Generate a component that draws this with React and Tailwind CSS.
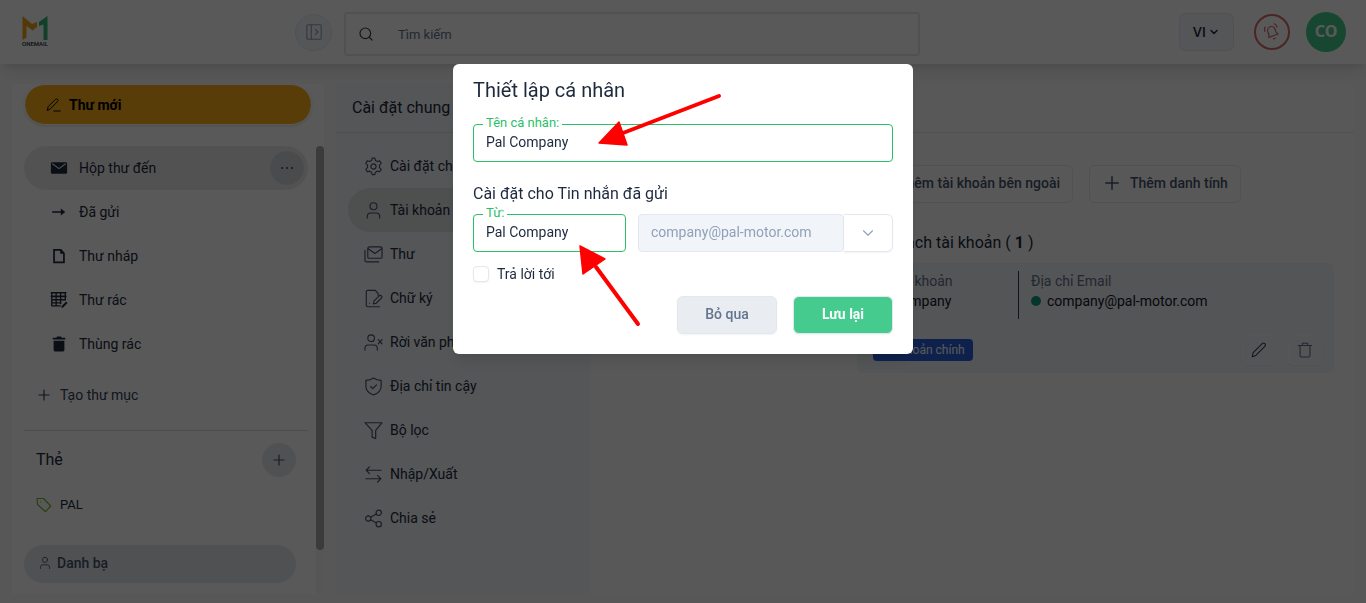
import { ChevronDown, Search } from 'lucide-react';

const Icon = ({ children, className = 'size-5', viewBox = '0 0 20 20' }) => (
    <svg
        viewBox={viewBox}
        className={className}
        fill="none"
        stroke="currentColor"
        strokeWidth="1.2"
        strokeLinecap="round"
        strokeLinejoin="round"
        aria-hidden="true"
    >
        {children}
    </svg>
);

const PlusIcon = ({ className = 'size-4' }) => (
    <Icon className={className} viewBox="0 0 16 16">
        <path d="M8 3v10M3 8h10" />
    </Icon>
);

const folders = [
    {
        label: 'Hộp thư đến',
        active: true,
        icon: (
            <>
                <rect x="1" y="3.5" width="18" height="13" rx="1.4" fill="currentColor" stroke="none" />
                <path d="M3 5.5l7 5.2 7-5.2" stroke="#e9e9e9" strokeWidth="1.3" />
            </>
        ),
    },
    {
        label: 'Đã gửi',
        icon: (
            <>
                <path d="M3 10h10" strokeWidth="1.8" />
                <path d="M12 6l5 4-5 4z" fill="currentColor" stroke="none" />
            </>
        ),
    },
    {
        label: 'Thư nháp',
        icon: (
            <>
                <path d="M4.5 3.3h7.5l3.500 3.700v10h-11z" strokeWidth="1.9" strokeLinejoin="miter" />
                <path d="M11.3 3v4.500h4.500z" fill="currentColor" stroke="none" />
            </>
        ),
    },
    {
        label: 'Thư rác',
        icon: (
            <>
                <path d="M1.500 2h16M1.500 6h16" strokeWidth="1.8" />
                <path d="M2 2v14.500h9.500M2 9.700h15M2 13.200h10M6.800 2v14.500M11.800 2v12M17 2v8" strokeWidth="1.5" />
                <path d="M12.500 19l.500-2.300 5-5 1.500 1.500-5 5z" fill="currentColor" stroke="none" />
            </>
        ),
    },
    {
        label: 'Thùng rác',
        icon: (
            <path
                d="M4 6.500h12v10.300a1.500 1.500 0 0 1-1.500 1.500h-9a1.500 1.500 0 0 1-1.500-1.500zM3 3h4l.7-1.200h4.600L13 3h4v2H3z"
                fill="currentColor"
                stroke="none"
            />
        ),
    },
];

const settings = [
    {
        label: 'Cài đặt chung',
        icon: (
            <>
                <circle cx="10" cy="10" r="2.700" />
                <path d="M8.600 1.200h2.800l.700 2.500 1.900 1.100 2.500-.700 1.600 2.600-1.800 1.800v2.600l1.800 1.900-1.600 2.600-2.500-.700-1.900 1.100-.700 2.600H8.600l-.700-2.600L6 14.900l-2.500.700L1.900 13l1.800-1.900V8.500L1.900 6.700l1.600-2.600 2.500.700 1.900-1.100z" />
            </>
        ),
    },
    {
        label: 'Tài khoản',
        active: true,
        icon: (
            <>
                <circle cx="10" cy="5.500" r="3.700" />
                <path d="M3.500 18v-2a3.500 3.500 0 0 1 3.500-3.400h6a3.500 3.500 0 0 1 3.500 3.400v2" />
            </>
        ),
    },
    {
        label: 'Thư',
        icon: (
            <>
                <rect x="4" y="2" width="15" height="12" rx="1.500" />
                <path d="M4.500 4l7 5 7-5M1 5.500v10.500a1.800 1.800 0 0 0 1.800 1.800h12.700" />
            </>
        ),
    },
    {
        label: 'Chữ ký',
        icon: (
            <>
                <path d="M15 5.200L12 1.500H4a1.600 1.600 0 0 0-1.600 1.600v14A1.600 1.600 0 0 0 4 18.700h12.500M6 15h.1M15 5.200V7" />
                <path d="M10.500 12.800l5.500-5.500a1.600 1.600 0 0 1 2.300 2.300l-5.500 5.400-2.900.700z" />
            </>
        ),
    },
    {
        label: 'Rời văn phòng',
        icon: (
            <>
                <circle cx="7.500" cy="5.500" r="3.500" />
                <path d="M1 18v-2a3.500 3.500 0 0 1 3.500-3.400h6a3.500 3.500 0 0 1 3.500 3.400v2M15 7l4 4.500M19 7l-4 4.500" />
            </>
        ),
    },
    {
        label: 'Địa chỉ tin cậy',
        icon: (
            <>
                <path d="M10 1c2.200 1.700 4.900 2.500 8 2.500V10c0 4.200-3.500 7.200-8 9-4.500-1.800-8-4.800-8-9V3.500C5.100 3.500 7.800 2.700 10 1z" />
                <path d="M7 10l2.200 2.200 4-4" />
            </>
        ),
    },
    {
        label: 'Bộ lọc',
        icon: <path d="M1 1.800h18l-6.700 8v8.700l-3.800-1.500V9.800z" />,
    },
    {
        label: 'Nhập/Xuất',
        icon: <path d="M18 5.500H2.500M5.800 2L2.300 5.500 5.800 9M2 14.500h15.500M14.200 11l3.500 3.500-3.500 3.500" />,
    },
    {
        label: 'Chia sẻ',
        icon: (
            <>
                <circle cx="4.500" cy="10" r="2.800" />
                <circle cx="15.500" cy="4" r="2.800" />
                <circle cx="15.500" cy="16" r="2.800" />
                <path d="M7 8.700L13 5.300M7 11.300l6 3.400" />
            </>
        ),
    },
];

const Logo = () => (
    <a href="#" aria-label="One Mail" className="ml-[10px] flex w-[26px] flex-col items-center">
        <svg viewBox="0 0 26 24" className="h-6 w-[26px]" aria-hidden="true">
            <path d="M.500 0l9.500 8 5-2v5l-4.500 3.500-6-4.500v11.500l-4 2.500z" fill="#f0a418" />
            <path d="M17 6L25.500 0v24h-4V8.500L17 10z" fill="#2fb878" />
        </svg>
        <span className="text-[6px] leading-[8px] font-medium text-slate-800">ONEMAIL</span>
    </a>
);

const Header = () => (
    <header className="relative z-10 flex h-16 shrink-0 items-center bg-white px-3 shadow-lg">
        <div className="w-[283px] shrink-0">
            <Logo />
        </div>
        <button
            type="button"
            aria-label="Thu gọn"
            className="mr-3 flex size-[37px] shrink-0 items-center justify-center rounded-full border border-slate-200 bg-slate-100 text-slate-400"
        >
            <Icon className="size-[18px]">
                <rect x="2" y="2" width="16" height="16" rx="1.500" />
                <path d="M7 2v16M11.500 7l3 3-3 3" />
            </Icon>
        </button>
        <label className="mt-1 flex h-11 w-full max-w-[576px] items-center rounded-sm border-2 border-[#e5e7ea] pl-3 text-slate-700">
            <Search className="size-4 shrink-0" strokeWidth={1.8} />
            <input
                type="text"
                aria-label="Tìm kiếm"
                placeholder="Tìm kiếm"
                className="h-full w-full px-6 text-[13px] outline-none placeholder:text-slate-500"
            />
        </label>
        <div className="ml-auto flex items-center pr-2">
            <button
                type="button"
                className="mr-5 flex h-[38px] w-[55px] items-center justify-center gap-0.5 rounded-md border border-slate-200 bg-slate-100 font-['Open_Sans',sans-serif] text-sm font-semibold text-slate-800"
            >
                VI
                <ChevronDown className="size-3" strokeWidth={3} />
            </button>
            <button
                type="button"
                aria-label="Thông báo"
                className="mr-4 flex size-9 items-center justify-center rounded-full border-2 border-[#d56a6a] text-[#d56a6a]"
            >
                <Icon className="size-5">
                    <g transform="rotate(-20 10 10)">
                        <path d="M5 14h10l-1.200-2.200V8.200a3.800 3.800 0 0 0-7.600 0v3.600zM9 17h2M3.500 7c0-1.800.600-3 1.700-4M16.500 7c0-1.800-.600-3-1.700-4" />
                    </g>
                </Icon>
            </button>
            <button
                type="button"
                className="size-10 rounded-full bg-[#44cb8d] pb-0.5 font-['Noto_Sans',sans-serif] text-base font-bold text-white"
            >
                CO
            </button>
        </div>
    </header>
);

const Sidebar = () => (
    <aside className="flex w-[312px] shrink-0 flex-col bg-white pl-3">
        <button
            type="button"
            className="mr-3 flex h-[41px] items-center gap-2 rounded-full border border-white bg-[#fbae17] bg-clip-padding pl-5 text-sm font-bold text-black shadow-sm"
        >
            <Icon className="size-4">
                <path d="M3 16.500l1-4.500 9-9a1.800 1.800 0 0 1 2.700 2.700l-9 9zM11 17.500h8" />
            </Icon>
            Thư mới
        </button>
        <div className="mt-[21px] flex flex-1 gap-2">
            <nav className="flex-1">
                <ul>
                    {folders.map((folder) => (
                        <li
                            key={folder.label}
                            className={`flex h-11 items-center rounded-full pr-1 pl-[26px] ${folder.active ? 'bg-[#ececec]' : ''}`}
                        >
                            <a href="#" className="flex flex-1 items-center gap-[11px] text-sm text-slate-800">
                                <Icon className="size-[18px]">{folder.icon}</Icon>
                                {folder.label}
                            </a>
                            {folder.active && (
                                <button
                                    type="button"
                                    aria-label="Tùy chọn"
                                    className="flex size-[34px] items-center justify-center rounded-full bg-[#d5d8dd] text-slate-600"
                                >
                                    <Icon className="size-4" viewBox="0 0 16 16">
                                        <path d="M3 8h.1M8 8h.1M13 8h.1" strokeWidth="2.200" />
                                    </Icon>
                                </button>
                            )}
                        </li>
                    ))}
                </ul>
                <button type="button" className="mt-[7px] flex h-11 items-center gap-2 pl-3 text-sm text-slate-700">
                    <PlusIcon />
                    Tạo thư mục
                </button>
                <hr className="mt-[13px] border-[#d9dce0]" />
                <div className="mt-3 flex items-center justify-between pr-3 pl-3">
                    <h2 className="text-base text-slate-800">Thẻ</h2>
                    <button
                        type="button"
                        aria-label="Thêm thẻ"
                        className="flex size-[34px] items-center justify-center rounded-full bg-[#e5e8ec] text-slate-600"
                    >
                        <PlusIcon />
                    </button>
                </div>
                <a href="#" className="mt-3 flex h-8 items-center gap-2 pl-3 text-[13px] text-slate-800">
                    <Icon className="size-4 text-[#74b72e]" viewBox="0 0 16 16">
                        <path d="M1 1.500h6.500L14.700 9 9.500 14.700 1.500 7.500zM4.500 4.800h.1" />
                    </Icon>
                    PAL
                </a>
                <a
                    href="#"
                    className="mt-6 mr-3 flex h-[38px] items-center gap-[5px] rounded-full bg-[#e5e8ec] pb-0.5 pl-[14px] text-sm font-medium text-slate-600"
                >
                    <Icon className="size-[14px]">{settings[1].icon}</Icon>
                    Danh bạ
                </a>
            </nav>
            <div className="w-2 rounded-full bg-neutral-100">
                <div className="h-[404px] rounded-full bg-[#a8a8a8]"></div>
            </div>
        </div>
    </aside>
);

const SettingsMenu = () => (
    <section className="w-[254px] shrink-0 bg-slate-100">
        <h2 className="h-[49px] border-b border-[#dcdfe4] pt-3 pl-4 text-base text-slate-800">Cài đặt chung</h2>
        <ul className="px-3 pt-[11px]">
            {settings.map((item) => (
                <li key={item.label}>
                    <a
                        href="#"
                        className={`flex h-11 items-center gap-[7px] rounded-full pl-4 text-sm text-slate-800 ${item.active ? 'bg-[#dfe1e3]' : ''}`}
                    >
                        <Icon className="size-[19px] text-slate-600">{item.icon}</Icon>
                        {item.label}
                    </a>
                </li>
            ))}
        </ul>
    </section>
);

const AddButton = ({ children }) => (
    <button
        type="button"
        className="flex h-[38px] items-center gap-2 rounded-md border border-slate-200 px-3 pb-0.5 text-sm font-medium text-slate-600"
    >
        <PlusIcon className="size-5" />
        {children}
    </button>
);

const Accounts = () => (
    <main className="min-w-0 flex-1 bg-[#fcfcfc]">
        <div className="h-[49px] border-b border-slate-200"></div>
        <div className="pt-8 pr-5 pl-[267px]">
            <div className="flex gap-4 whitespace-nowrap">
                <AddButton>Thêm tài khoản bên ngoài</AddButton>
                <AddButton>Thêm danh tính</AddButton>
            </div>
            <h2 className="mt-7 text-base text-slate-800">
                Danh sách tài khoản ( <b>1</b> )
            </h2>
            <article className="mt-2 rounded-md bg-[#eff2f6] p-2 text-sm">
                <div className="flex">
                    <dl className="w-[154px] border-r border-slate-700 pl-1 leading-5">
                        <dt className="text-slate-500">Tên tài khoản</dt>
                        <dd className="pb-2 text-slate-900">Pal Company</dd>
                    </dl>
                    <dl className="pl-3 leading-5">
                        <dt className="text-slate-500">Địa chỉ Email</dt>
                        <dd className="flex items-center gap-[6px] text-slate-900">
                            <span className="size-[10px] rounded-full bg-[#0d9b7c]"></span>
                            company@pal-motor.com
                        </dd>
                    </dl>
                </div>
                <div className="mt-4 flex items-center gap-3 pr-1 pl-2">
                    <span className="mr-auto rounded-sm bg-[#2a5fdc] px-2 py-0.5 text-xs leading-[18px] text-white">
                        Tài khoản chính
                    </span>
                    <button
                        type="button"
                        aria-label="Sửa"
                        className="flex h-[30px] w-[34px] items-center justify-center rounded-md border border-slate-50 text-slate-700 shadow-xs"
                    >
                        <Icon className="size-[18px]">
                            <path d="M2.500 17.500l1-4.500 10-10a1.900 1.900 0 0 1 3 3l-10 10z" />
                        </Icon>
                    </button>
                    <button
                        type="button"
                        aria-label="Xóa"
                        className="flex h-[30px] w-[34px] items-center justify-center rounded-md border border-slate-50 text-slate-500 shadow-xs"
                    >
                        <Icon className="size-[18px]">
                            <path d="M4.500 5v11.500a1.200 1.200 0 0 0 1.200 1.200h8.600a1.200 1.200 0 0 0 1.200-1.200V5M2.500 5h15M7 5V2.500h6V5" />
                        </Icon>
                    </button>
                </div>
            </article>
        </div>
    </main>
);

const TextField = ({ id, label, value, className = '' }) => (
    <div className={`relative ${className}`}>
        <label htmlFor={id} className="absolute -top-[9px] left-[10px] bg-white px-[3px] text-[13px] leading-4 text-[#2bbf6a]">
            {label}
        </label>
        <input
            id={id}
            type="text"
            defaultValue={value}
            className="h-[38px] w-full rounded-sm border border-[#2bbf6a] px-3 pb-0.5 text-sm text-slate-800 outline-none"
        />
    </div>
);

// Red pointers that call out the two name fields
const Pointers = () => (
    <svg
        viewBox="0 0 460 290"
        className="pointer-events-none absolute inset-0 size-full"
        fill="#ff0000"
        stroke="#ff0000"
        strokeLinecap="round"
        strokeLinejoin="round"
        aria-hidden="true"
    >
        <path d="M266 32L170 69" strokeWidth="4" />
        <path d="M146 79l20-21 8 23z" strokeWidth="1.500" />
        <path d="M185 260l-42-57" strokeWidth="4" />
        <path d="M127 182l25 13-22 15z" strokeWidth="1.500" />
    </svg>
);

const ProfileDialog = () => (
    <div className="fixed inset-0 z-20 flex items-start justify-center bg-black/65 pt-16">
        <form role="dialog" aria-labelledby="dialog-title" className="relative w-[460px] rounded-md bg-white px-5 pt-3 pb-5 shadow-lg">
            <h1 id="dialog-title" className="text-xl text-slate-800">
                Thiết lập cá nhân
            </h1>
            <TextField id="name" label="Tên cá nhân:" value="Pal Company" className="mt-5" />
            <h2 className="mt-5 text-base text-slate-800">Cài đặt cho Tin nhắn đã gửi</h2>
            <div className="mt-2 flex gap-3">
                <TextField id="from" label="Từ:" value="Pal Company" className="w-[153px]" />
                <div className="flex flex-1">
                    <input
                        type="text"
                        aria-label="Email"
                        disabled
                        value="company@pal-motor.com"
                        className="h-[38px] w-full min-w-0 rounded-sm border border-slate-200 bg-slate-100 px-3 pb-0.5 text-sm text-slate-400"
                    />
                    <button
                        type="button"
                        aria-label="Chọn email"
                        className="flex w-[49px] shrink-0 items-center justify-center rounded-r-md border border-l-0 border-slate-200 text-slate-400 shadow-xs"
                    >
                        <ChevronDown className="size-[18px]" strokeWidth={1.5} />
                    </button>
                </div>
            </div>
            <label className="mt-3 flex items-center gap-2 text-sm text-slate-800">
                <input
                    type="checkbox"
                    className="size-4 appearance-none rounded-sm border border-slate-200 bg-white shadow-xs"
                />
                Trả lời tới
            </label>
            <div className="mt-3 flex justify-end gap-4">
                <button
                    type="button"
                    className="h-[38px] w-[100px] rounded-md border border-slate-200 bg-[#e9edf2] pb-0.5 text-sm font-medium text-slate-500 shadow-xs"
                >
                    Bỏ qua
                </button>
                <button
                    type="submit"
                    className="h-[38px] w-[100px] rounded-md border border-slate-200 bg-[#44cb8d] pb-0.5 text-sm font-bold text-white shadow-xs"
                >
                    Lưu lại
                </button>
            </div>
            <Pointers />
        </form>
    </div>
);

const App = () => {
    return (
        <div className="flex min-h-screen flex-col bg-neutral-50 font-[Roboto,sans-serif]">
            <Header />
            <div className="flex flex-1 px-3 pt-5 pb-[9px]">
                <Sidebar />
                <div className="ml-3 flex min-w-0 flex-1">
                    <SettingsMenu />
                    <Accounts />
                </div>
            </div>
            <ProfileDialog />
        </div>
    );
};

export default App;
